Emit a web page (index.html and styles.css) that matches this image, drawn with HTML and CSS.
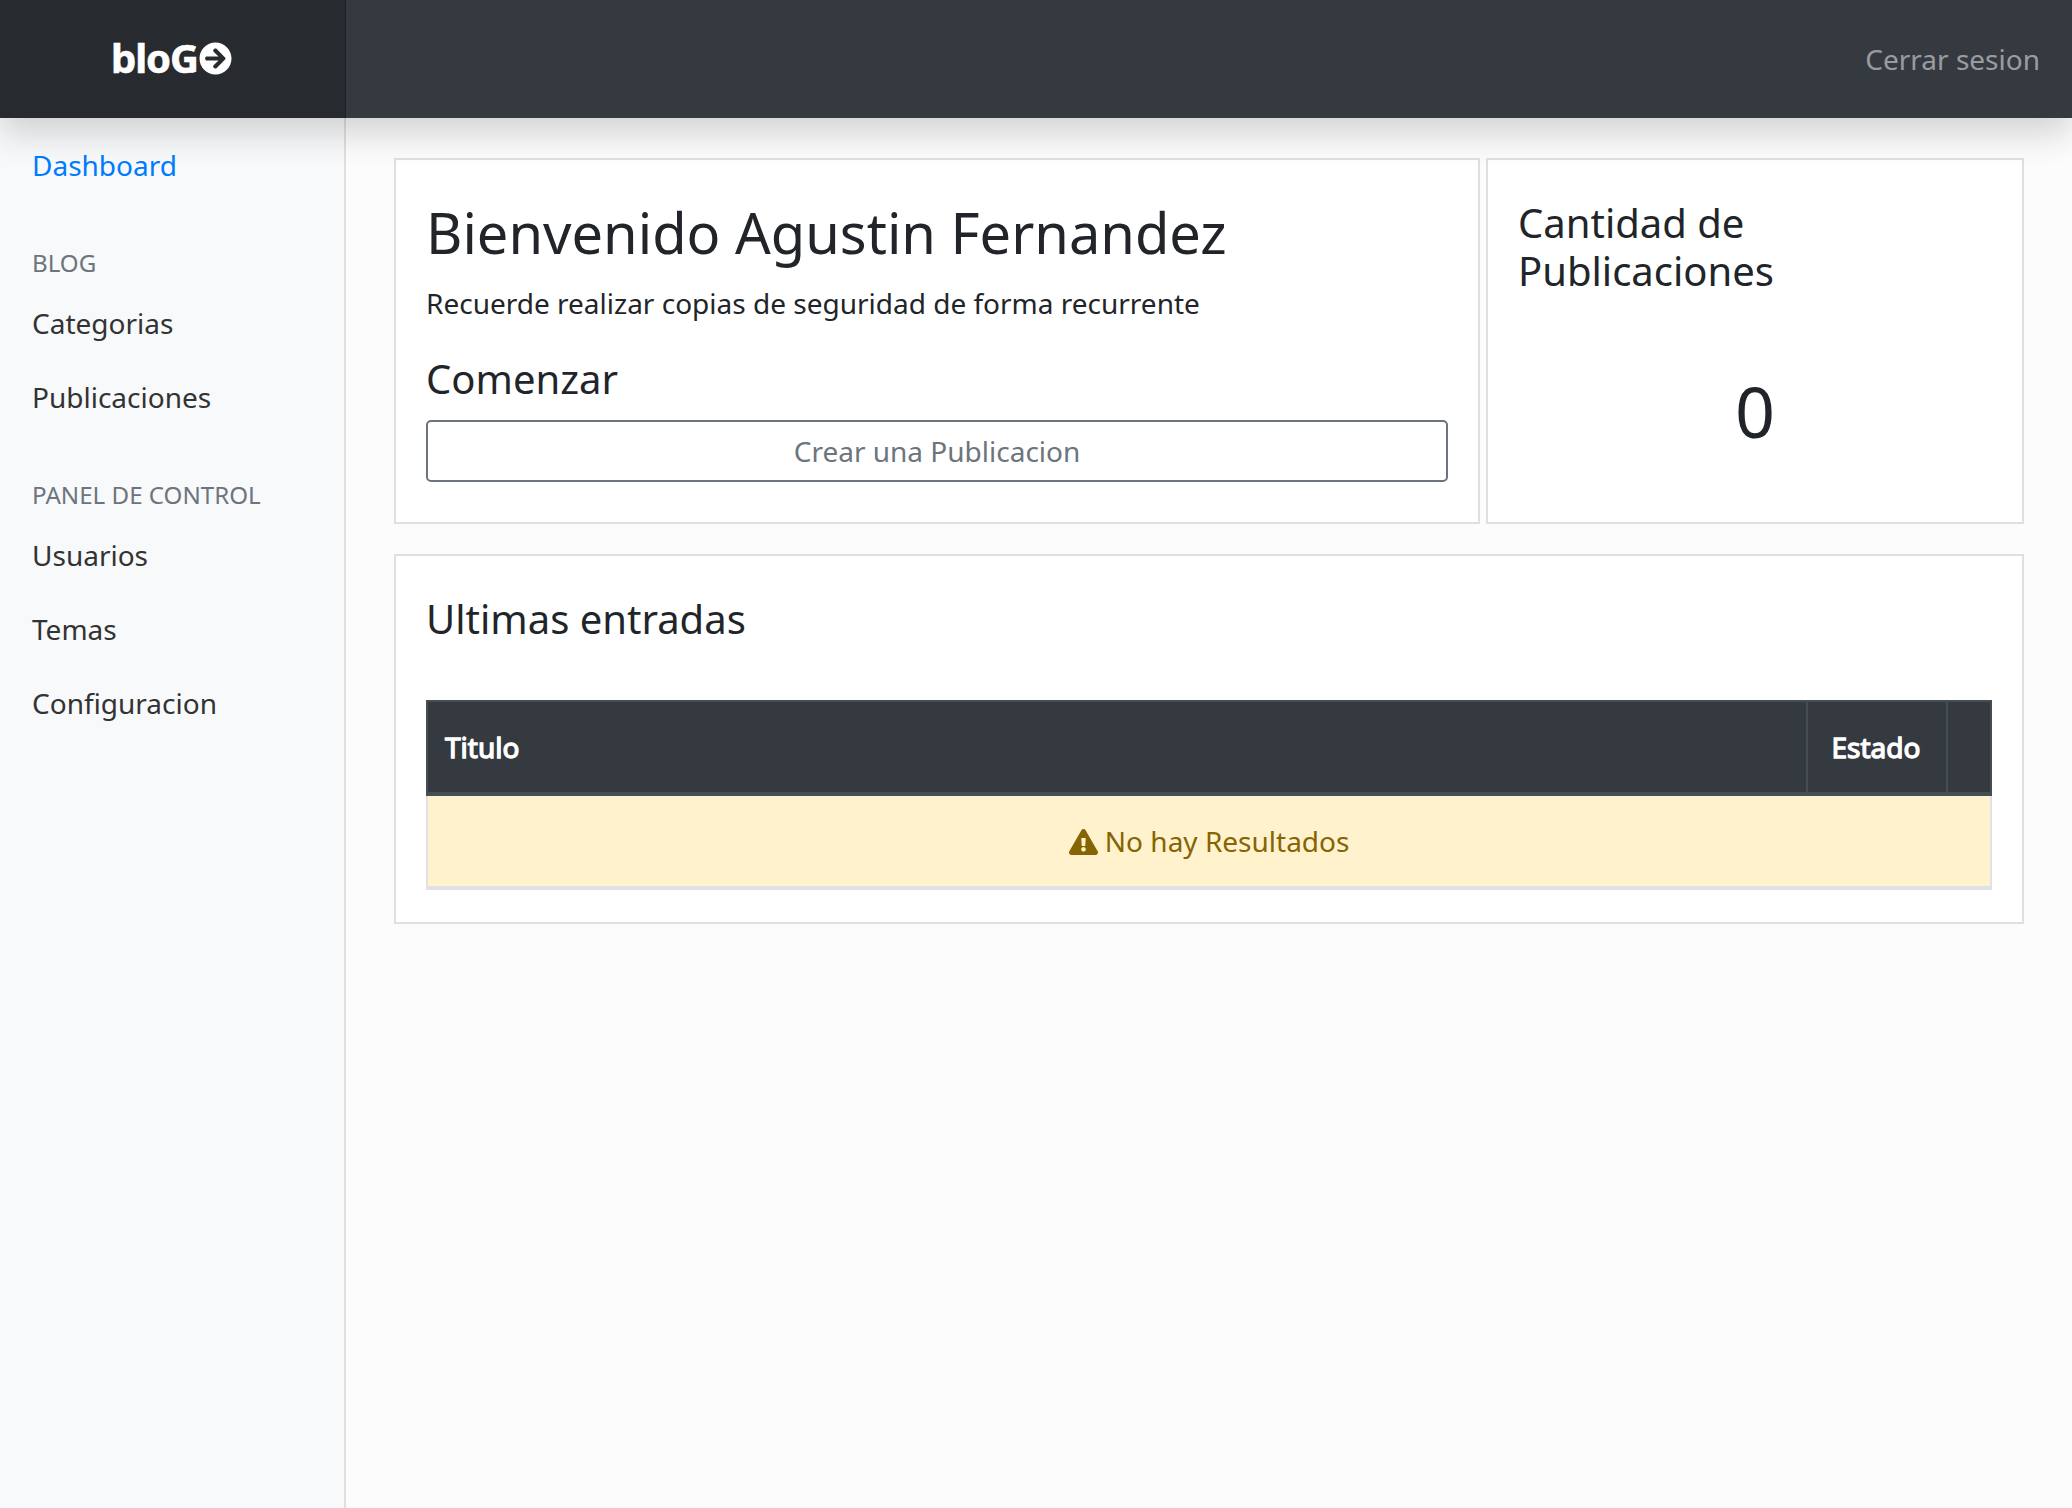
FILE: index.html
```html
<!DOCTYPE html>
<html lang="es">
<head>
<meta charset="utf-8">
<title>bloGo Dashboard</title>
<link rel="stylesheet" href="styles.css">
</head>
<body>
<header class="topbar">
  <a class="brand" href="#">bloG<svg class="brand-icon" viewBox="0 0 512 512"><path fill-rule="evenodd" d="M256 8c137 0 248 111 248 248S393 504 256 504 8 393 8 256 119 8 256 8zm-28.9 143.6l75.5 72.4H120c-13.3 0-24 10.7-24 24v16c0 13.3 10.7 24 24 24h182.6l-75.5 72.4c-9.7 9.3-9.9 24.8-.4 34.3l11 10.9c9.4 9.4 24.6 9.4 33.9 0L404.3 273c9.4-9.4 9.4-24.6 0-33.9L271.6 106.3c-9.4-9.4-24.6-9.4-33.9 0l-11 10.9c-9.5 9.6-9.3 25.1.4 34.4z"/></svg></a>
  <a class="logout" href="#">Cerrar sesion</a>
</header>
<div class="layout">
  <nav class="sidebar">
    <a class="nav-link active" href="#">Dashboard</a>
    <h6 class="nav-heading">BLOG</h6>
    <a class="nav-link" href="#">Categorias</a>
    <a class="nav-link" href="#">Publicaciones</a>
    <h6 class="nav-heading">PANEL DE CONTROL</h6>
    <a class="nav-link" href="#">Usuarios</a>
    <a class="nav-link" href="#">Temas</a>
    <a class="nav-link" href="#">Configuracion</a>
  </nav>
  <main class="content">
    <div class="row">
      <section class="card welcome">
        <h1 class="welcome-title">Bienvenido Agustin Fernandez</h1>
        <p class="welcome-text">Recuerde realizar copias de seguridad de forma recurrente</p>
        <h4 class="section-title">Comenzar</h4>
        <a class="btn-outline" href="#">Crear una Publicacion</a>
      </section>
      <section class="card stats">
        <h4 class="stats-title">Cantidad de Publicaciones</h4>
        <div class="stats-value">0</div>
      </section>
    </div>
    <section class="card entries">
      <h4 class="entries-title">Ultimas entradas</h4>
      <table class="table">
        <thead>
          <tr><th class="col-title">Titulo</th><th class="col-state">Estado</th><th class="col-actions"></th></tr>
        </thead>
        <tbody>
          <tr><td class="empty" colspan="3"><svg class="warn-icon" viewBox="0 0 576 512"><path fill-rule="evenodd" d="M569.517 440.013C587.975 472.007 564.806 512 527.94 512H48.054c-36.937 0-59.999-40.055-41.577-71.987L246.423 23.985c18.467-32.009 64.72-31.951 83.154 0l239.94 416.028zM288 354c-25.405 0-46 20.595-46 46s20.595 46 46 46 46-20.595 46-46-20.595-46-46-46zm-43.673-165.346l7.418 136c.347 6.364 5.609 11.346 11.982 11.346h48.546c6.373 0 11.635-4.982 11.982-11.346l7.418-136c.375-6.874-5.098-12.654-11.982-12.654h-63.383c-6.884 0-12.356 5.78-11.981 12.654z"/></svg> No hay Resultados</td></tr>
        </tbody>
      </table>
    </section>
  </main>
</div>
</body>
</html>
```
FILE: styles.css
```css
* { box-sizing: border-box; }
html, body { margin: 0; height: 100%; }
body {
  font-family: "Noto Sans", sans-serif;
  font-size: 28px;
  line-height: 1.5;
  color: #212529;
  background: #fcfcfc;
  display: flex;
  flex-direction: column;
  min-height: 1508px;
}
a { text-decoration: none; }
.topbar {
  height: 118px;
  flex: none;
  background: #343a40;
  display: flex;
  align-items: center;
  justify-content: space-between;
  box-shadow: 0 16px 32px rgba(0,0,0,.16);
  position: relative;
  z-index: 2;
}
.brand {
  width: 346px;
  height: 100%;
  background: #272b30;
  box-shadow: inset -1px 0 0 rgba(0,0,0,.25);
  color: #fff;
  font-weight: 700;
  font-size: 40px;
  display: flex;
  align-items: center;
  justify-content: center;
  letter-spacing: -1px;
  -webkit-text-stroke: .6px #fff;
  padding: 0 3px 2px 0;
}
.brand-icon { width: 33px; height: 33px; fill: #fff; margin-left: 1px; margin-top: 1px; }
.logout { color: rgba(255,255,255,.5); padding-right: 32px; }
.layout { flex: 1; display: flex; }
.sidebar {
  width: 346px;
  flex: none;
  background: #f8f9fa;
  border-right: 2px solid #dfdfdf;
  padding: 10px 0 0;
  display: flex;
  flex-direction: column;
}
.nav-link { color: #333; padding: 14px 32px; line-height: 46px; height: 74px; }
.nav-link.active { color: #007bff; }
.nav-heading {
  margin: 0;
  font-size: 24.15px;
  font-weight: 400;
  color: #6c757d;
  padding: 43px 32px 5px;
  line-height: 36px;
}
.content {
  flex: 1;
  min-width: 0;
  padding: 40px 48px 0;
  display: flex;
  flex-direction: column;
  gap: 30px;
}
.row { display: flex; gap: 6px; }
.card { background: #fff; border: 2px solid #dfdfdf; padding: 30px; }
.welcome { width: 1086px; height: 366px; flex: none; }
.stats { flex: 1; min-width: 0; }
.welcome-title { margin: 9px 0 0; font-size: 56px; font-weight: 400; line-height: 1.2; }
.welcome-text { margin: 16px 0 0; }
.section-title { margin: 31px 0 0; font-size: 40px; font-weight: 400; line-height: 1.2; }
.btn-outline {
  display: block;
  margin-top: 17px;
  height: 62px;
  line-height: 58px;
  border: 2px solid #6c757d;
  border-radius: 5px;
  text-align: center;
  color: #6c757d;
}
.stats-title { margin: 9px 0 0; font-size: 40px; font-weight: 400; line-height: 48px; }
.stats-value { text-align: center; font-size: 70px; line-height: 1.2; margin-top: 74px; }
.entries { height: 370px; }
.entries-title { margin: 0; font-size: 40px; font-weight: 400; line-height: 1.2; padding-top: 9px; }
.table { width: 100%; margin-top: 57px; border-collapse: separate; border-spacing: 0; }
.table th {
  background: #343a40;
  color: #fff;
  text-align: left;
  height: 96px;
  padding: 0 17px;
  font-weight: 400;
  -webkit-text-stroke: 1.3px #fff;
  border-top: 2px solid #454d55;
  border-bottom: 4px solid #454d55;
  border-right: 2px solid #454d55;
}
.table th.col-title { border-left: 2px solid #454d55; }
.table th.col-state { width: 140px; text-align: center; padding: 0 2px 0 0; }
.col-actions { width: 44px; }
.empty {
  background: #fff2cc;
  color: #856404;
  text-align: center;
  height: 94px;
  padding: 0;
  border-left: 2px solid #dee2e6;
  border-right: 2px solid #dee2e6;
  border-bottom: 4px solid #dee2e6;
}
.warn-icon { width: 29px; height: 26px; fill: #856404; vertical-align: -3px; }
```
